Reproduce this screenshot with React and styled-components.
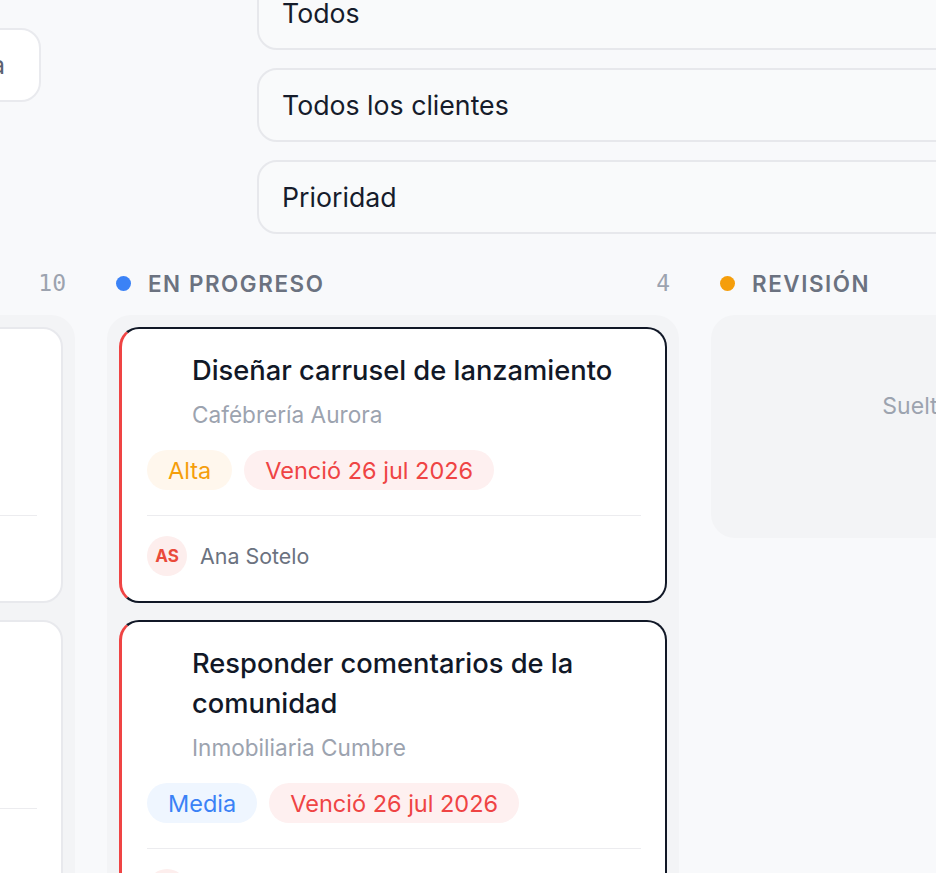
import React from "react";
import styled, { createGlobalStyle } from "styled-components";

const Global = createGlobalStyle`
  html, body { margin: 0; padding: 0; }
  body {
    background: #f8f9fb;
    font-family: Inter, "Noto Sans", "Liberation Sans", sans-serif;
    overflow: hidden;
    height: 873px;
  }
  * { box-sizing: border-box; }
`;

const Page = styled.div`
  width: 936px;
  height: 873px;
  overflow: hidden;
  background: #f8f9fb;
`;

const Toolbar = styled.div`
  display: flex;
  align-items: flex-start;
  gap: 216px;
  margin-top: -24px;
  margin-left: -219px;
`;

const SearchBox = styled.div`
  flex: 0 0 260px;
  height: 74px;
  margin-top: 52px;
  background: #ffffff;
  border: 2px solid #e9eaee;
  border-radius: 20px;
  display: flex;
  align-items: center;
  justify-content: flex-end;
  padding-right: 34px;
  font-size: 25px;
  color: #5b6170;
`;

const Filters = styled.div`
  flex: 0 0 900px;
  display: flex;
  flex-direction: column;
  gap: 18px;
`;

const FilterSelect = styled.div`
  height: 74px;
  background: #f9fafb;
  border: 2px solid #e7e8ec;
  border-radius: 20px;
  display: flex;
  align-items: center;
  padding-left: 23px;
  font-size: 26.7px;
  color: #161c2b;
`;

const Board = styled.div`
  display: flex;
  gap: 32px;
  margin-top: 33px;
  margin-left: -497px;
  align-items: flex-start;
`;

const Column = styled.section`
  flex: 0 0 572px;
  display: flex;
  flex-direction: column;
  gap: 16px;
`;

const ColumnHeader = styled.header`
  height: 32px;
  display: flex;
  align-items: center;
  padding: 0 9px 0 9px;
`;

const Dot = styled.span`
  width: 15px;
  height: 15px;
  border-radius: 50%;
  background: ${(p) => p.$color};
  margin-right: 17px;
`;

const ColumnTitle = styled.h3`
  margin: 0;
  flex: 1;
  font-size: 22.4px;
  font-weight: 600;
  letter-spacing: 0.07em;
  color: #6b7280;
  text-transform: uppercase;
`;

const Count = styled.span`
  font-family: "DejaVu Sans Mono", "Liberation Mono", monospace;
  font-size: 23px;
  color: #9ca3af;
`;

const CardList = styled.div`
  background: #f3f4f6;
  border-radius: 24px;
  padding: 12px;
  display: flex;
  flex-direction: column;
  gap: 17px;
  min-height: 700px;
`;

const DropZone = styled.div`
  background: #f3f4f6;
  border-radius: 24px;
  height: 223px;
  padding-top: 76px;
  text-align: center;
  font-size: 23px;
  line-height: 30px;
  color: #9ca3af;
`;

const Card = styled.article`
  background: #ffffff;
  border-radius: 20px;
  border: 2px solid ${(p) => (p.$active ? "#111827" : "#e8e9ed")};
  border-left: ${(p) => (p.$active ? "3px solid #ef4444" : "2px solid #e8e9ed")};
  padding: 22px 24px 25px 25px;
  display: flex;
  flex-direction: column;
`;

const CardBody = styled.div`
  padding-left: 45px;
  display: flex;
  flex-direction: column;
  gap: 8px;
`;

const CardTitle = styled.h4`
  margin: 0;
  font-size: 27.3px;
  line-height: 40px;
  font-weight: 500;
  color: #111827;
`;

const Client = styled.div`
  font-size: 22.6px;
  line-height: 32px;
  color: #9ca3af;
`;

const Tags = styled.div`
  display: flex;
  gap: 12px;
  margin-top: 19px;
`;

const tagColors = {
  alta: { bg: "#fff7ed", fg: "#f59e0b" },
  media: { bg: "#eff6ff", fg: "#3b82f6" },
  due: { bg: "#fef0f0", fg: "#ef4444" },
  baja: { bg: "#f0fdf4", fg: "#22c55e" },
};

const Tag = styled.span`
  height: 40px;
  padding: 0 21px;
  border-radius: 20px;
  display: inline-flex;
  align-items: center;
  font-size: 23.5px;
  background: ${(p) => tagColors[p.$kind].bg};
  color: ${(p) => tagColors[p.$kind].fg};
`;

const Divider = styled.hr`
  border: 0;
  border-top: 1.5px solid #ececef;
  margin: 25px 0 20px;
  width: 100%;
`;

const Footer = styled.div`
  display: flex;
  align-items: center;
  gap: 13px;
`;

const Avatar = styled.span`
  width: 40px;
  height: 40px;
  border-radius: 50%;
  background: #fdeeed;
  color: #ea4a3a;
  font-size: 17px;
  font-weight: 700;
  display: inline-flex;
  align-items: center;
  justify-content: center;
`;

const Assignee = styled.span`
  font-size: 21.4px;
  color: #6b7280;
`;

function TaskCard({ task, active }) {
  return (
    <Card $active={active}>
      <CardBody>
        <CardTitle>{task.title}</CardTitle>
        <Client>{task.client}</Client>
      </CardBody>
      <Tags>
        <Tag $kind={task.priority}>{task.priorityLabel}</Tag>
        <Tag $kind="due">{task.due}</Tag>
      </Tags>
      <Divider />
      <Footer>
        <Avatar>{task.initials}</Avatar>
        <Assignee>{task.assignee}</Assignee>
      </Footer>
    </Card>
  );
}

const todo = [
  {
    title: "Guion de reel",
    client: "Estudio Nube",
    priority: "baja",
    priorityLabel: "Baja",
    due: "2 ago 2026",
    initials: "LM",
    assignee: "Luis Mora",
  },
  {
    title: "Copy de anuncios",
    client: "Estudio Nube",
    priority: "media",
    priorityLabel: "Media",
    due: "5 ago 2026",
    initials: "LM",
    assignee: "Luis Mora",
  },
];

const progress = [
  {
    title: "Diseñar carrusel de lanzamiento",
    client: "Cafébrería Aurora",
    priority: "alta",
    priorityLabel: "Alta",
    due: "Venció 26 jul 2026",
    initials: "AS",
    assignee: "Ana Sotelo",
  },
  {
    title: "Responder comentarios de la comunidad",
    client: "Inmobiliaria Cumbre",
    priority: "media",
    priorityLabel: "Media",
    due: "Venció 26 jul 2026",
    initials: "AS",
    assignee: "Ana Sotelo",
  },
];

export default function App() {
  return (
    <Page>
      <Global />
      <Toolbar>
        <SearchBox>Buscar tarea</SearchBox>
        <Filters>
          <FilterSelect>Todos</FilterSelect>
          <FilterSelect>Todos los clientes</FilterSelect>
          <FilterSelect>Prioridad</FilterSelect>
        </Filters>
      </Toolbar>
      <Board>
        <Column>
          <ColumnHeader>
            <Dot $color="#9ca3af" />
            <ColumnTitle>Por hacer</ColumnTitle>
            <Count>10</Count>
          </ColumnHeader>
          <CardList>
            {todo.map((t) => (
              <TaskCard key={t.title} task={t} />
            ))}
          </CardList>
        </Column>
        <Column>
          <ColumnHeader>
            <Dot $color="#3b82f6" />
            <ColumnTitle>En progreso</ColumnTitle>
            <Count>4</Count>
          </ColumnHeader>
          <CardList>
            {progress.map((t) => (
              <TaskCard key={t.title} task={t} active />
            ))}
          </CardList>
        </Column>
        <Column>
          <ColumnHeader>
            <Dot $color="#f59e0b" />
            <ColumnTitle>Revisión</ColumnTitle>
            <Count>0</Count>
          </ColumnHeader>
          <DropZone>Suelta una tarea aquí</DropZone>
        </Column>
      </Board>
    </Page>
  );
}
